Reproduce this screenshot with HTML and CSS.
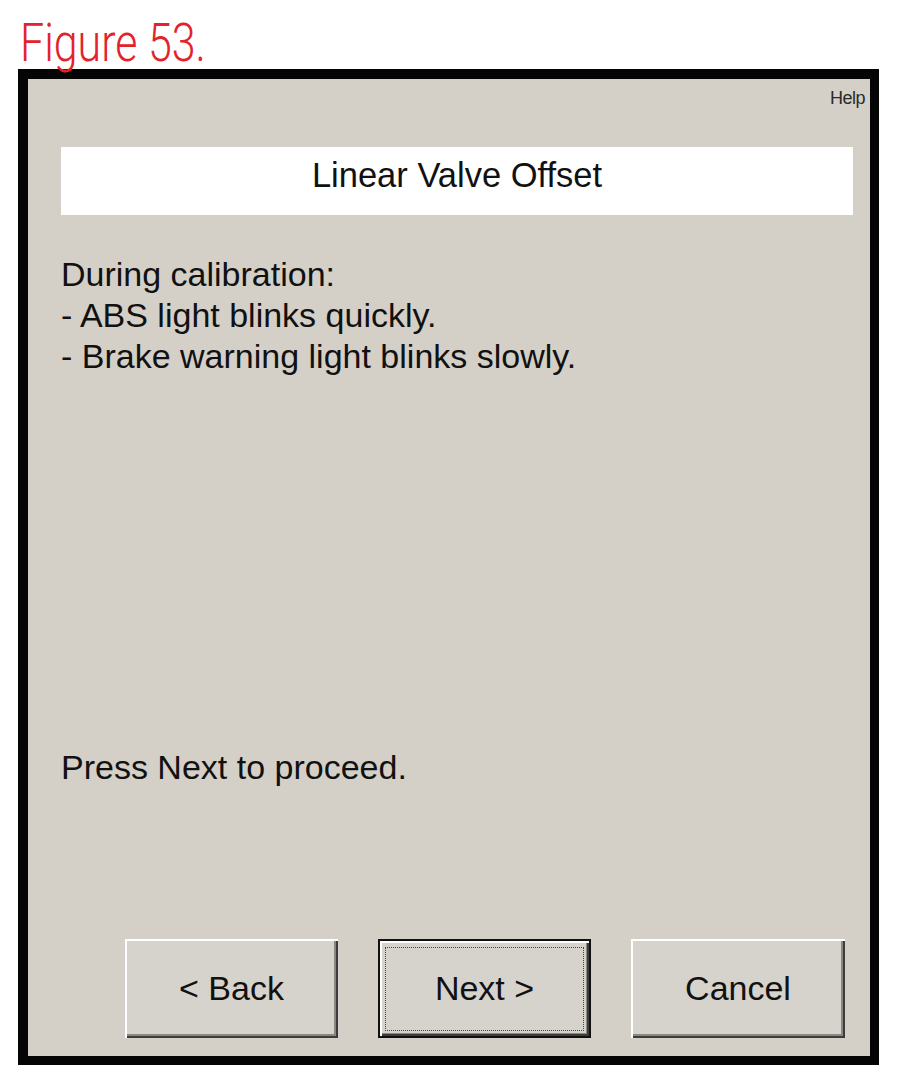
FILE: index.html
```html
<!DOCTYPE html>
<html lang="en">
<head>
<meta charset="utf-8">
<title>Figure 53. Linear Valve Offset</title>
<link rel="stylesheet" href="styles.css">
</head>
<body>
<div class="caption"><span class="caption-text">Figure 53.</span></div>
<div class="frame">
  <div class="help-row"><span class="help">Help</span></div>
  <div class="title-box">Linear Valve Offset</div>
  <div class="body-text">
    <div class="line">During calibration:</div>
    <div class="line">- ABS light blinks quickly.</div>
    <div class="line">- Brake warning light blinks slowly.</div>
  </div>
  <div class="proceed">Press Next to proceed.</div>
  <div class="buttons">
    <div class="btn btn-back">&lt; Back</div>
    <div class="btn btn-default btn-next">Next &gt;</div>
    <div class="btn btn-cancel">Cancel</div>
  </div>
</div>
</body>
</html>
```
FILE: styles.css
```css
html, body {
  margin: 0;
  padding: 0;
  background: #ffffff;
}
body {
  width: 903px;
  height: 1080px;
  overflow: hidden;
  font-family: "Liberation Sans", Arial, sans-serif;
}
.caption {
  height: 69px;
  box-sizing: border-box;
  padding-top: 17px;
  padding-left: 20px;
  line-height: 53px;
  white-space: nowrap;
}
.caption-text {
  display: inline-block;
  font-family: Roboto, "Liberation Sans", sans-serif;
  font-weight: 300;
  font-size: 53px;
  letter-spacing: 0px;
  color: #e3232c;
  transform: scaleX(0.81);
  transform-origin: left center;
}
.frame {
  margin-left: 18px;
  width: 861px;
  height: 996px;
  box-sizing: border-box;
  border-style: solid;
  border-color: #050505;
  border-width: 10px 9px 9px 10px;
  background: #d4d0c8;
  display: flex;
  flex-direction: column;
}
.help-row {
  display: flex;
  justify-content: flex-end;
  padding-top: 9px;
  padding-right: 5px;
  height: 20px;
  line-height: 20px;
}
.help {
  font-size: 18px;
  letter-spacing: -0.5px;
  color: #2a2a2a;
}
.title-box {
  margin: 39px 17px 0 33px;
  height: 68px;
  box-sizing: border-box;
  padding-bottom: 12px;
  background: #ffffff;
  text-align: center;
  font-size: 34.5px;
  line-height: 56px;
  color: #111111;
}
.body-text {
  margin-top: 39px;
  margin-left: 33px;
  font-size: 34px;
  line-height: 41px;
  color: #111111;
}
.proceed {
  margin-top: 370px;
  margin-left: 33px;
  font-size: 34px;
  line-height: 41px;
  color: #111111;
}
.buttons {
  margin-top: 151px;
  display: flex;
  justify-content: flex-end;
  padding-right: 25px;
  gap: 40px;
}
.btn {
  position: relative;
  width: 213px;
  height: 99px;
  box-sizing: border-box;
  display: flex;
  align-items: center;
  justify-content: center;
  font-size: 34px;
  color: #111111;
  background: #d6d3cc;
  box-shadow:
    inset 2px 2px 0 #ffffff,
    inset -2px -2px 0 #3c3c3c,
    inset -4px -4px 0 #8a8780;
}
.btn-cancel {
  width: 214px;
}
.btn-default {
  border: 2px solid #111111;
  box-shadow:
    inset 2px 2px 0 #ffffff,
    inset -2px -2px 0 #3c3c3c,
    inset -3px -3px 0 #8a8780;
}
.btn-default::after {
  content: "";
  position: absolute;
  top: 6px;
  left: 5px;
  right: 5px;
  bottom: 5px;
  border: 1px dotted #444444;
}
```
